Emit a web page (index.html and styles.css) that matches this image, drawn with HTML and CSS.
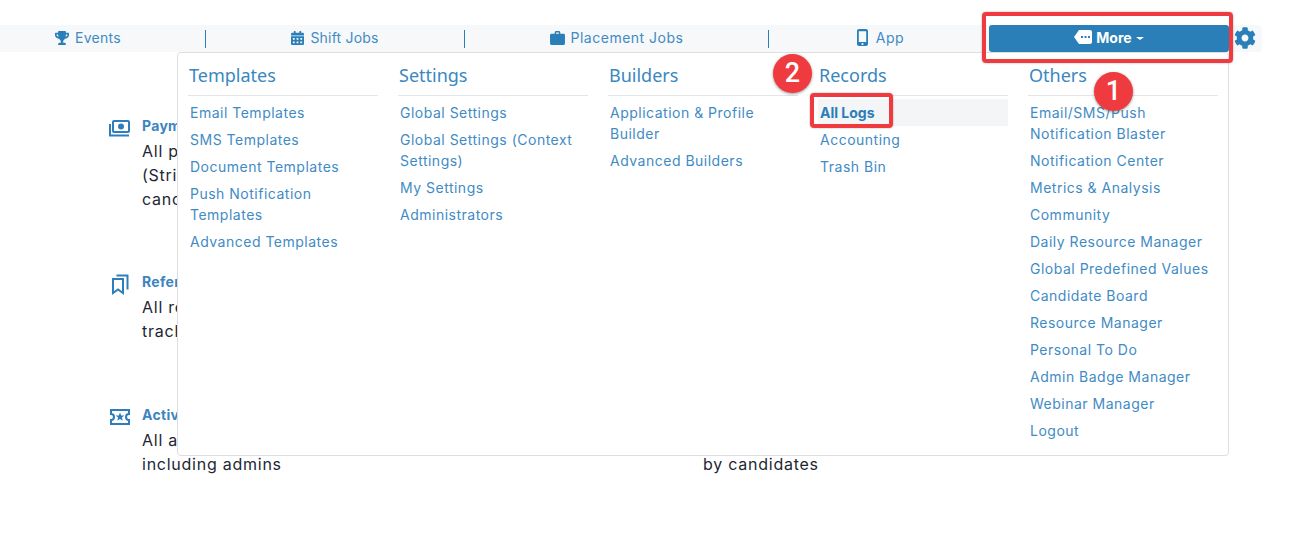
FILE: index.html
```html
<!DOCTYPE html>
<html lang="en">
<head>
<meta charset="utf-8">
<title>All Logs</title>
<link rel="stylesheet" href="styles.css">
</head>
<body>
<header class="topbar">
  <nav class="tabs">
    <a class="tab tab-first"><svg class="icon i-trophy" viewBox="0 0 576 512" preserveAspectRatio="none"><path d="M552 64H448V24c0-13.3-10.7-24-24-24H152c-13.3 0-24 10.7-24 24v40H24C10.7 64 0 74.7 0 88v56c0 35.7 22.5 72.4 61.9 100.7 31.5 22.7 69.8 37.1 110 41.7C203.3 338.5 240 360 240 360v72h-48c-35.3 0-64 20.7-64 56v12c0 6.6 5.4 12 12 12h296c6.6 0 12-5.4 12-12v-12c0-35.3-28.7-56-64-56h-48v-72s36.7-21.5 68.1-73.6c40.3-4.6 78.7-19 110-41.7 39.3-28.3 61.9-65 61.9-100.7V88c0-13.3-10.7-24-24-24zM99.3 192.8C74.9 175.2 64 155.6 64 144v-16h64.2c1 32.6 5.8 61.2 12.8 86.2-15.1-5.2-29.2-12.4-41.7-21.4zM512 144c0 16.1-17.7 36.1-35.3 48.8-12.5 9-26.7 16.2-41.8 21.4 7-25 11.8-53.6 12.8-86.2H512v16z"/></svg>Events</a>
    <a class="tab tab-shift"><svg class="icon i-cal" viewBox="0 0 448 512" preserveAspectRatio="none"><path d="M0 464c0 26.5 21.5 48 48 48h352c26.5 0 48-21.5 48-48V192H0v272zm320-196c0-6.6 5.4-12 12-12h40c6.6 0 12 5.4 12 12v40c0 6.6-5.4 12-12 12h-40c-6.6 0-12-5.4-12-12v-40zm0 128c0-6.6 5.4-12 12-12h40c6.6 0 12 5.4 12 12v40c0 6.6-5.4 12-12 12h-40c-6.6 0-12-5.4-12-12v-40zM192 268c0-6.6 5.4-12 12-12h40c6.6 0 12 5.4 12 12v40c0 6.6-5.4 12-12 12h-40c-6.6 0-12-5.4-12-12v-40zm0 128c0-6.6 5.4-12 12-12h40c6.6 0 12 5.4 12 12v40c0 6.6-5.4 12-12 12h-40c-6.6 0-12-5.4-12-12v-40zM64 268c0-6.6 5.4-12 12-12h40c6.6 0 12 5.4 12 12v40c0 6.6-5.4 12-12 12H76c-6.6 0-12-5.4-12-12v-40zm0 128c0-6.6 5.4-12 12-12h40c6.6 0 12 5.4 12 12v40c0 6.6-5.4 12-12 12H76c-6.6 0-12-5.4-12-12v-40zM400 64h-48V16c0-8.8-7.2-16-16-16h-32c-8.8 0-16 7.2-16 16v48H160V16c0-8.8-7.2-16-16-16h-32c-8.8 0-16 7.2-16 16v48H48C21.5 64 0 85.5 0 112v48h448v-48c0-26.5-21.500-48-48-48z"/></svg>Shift Jobs</a>
    <a class="tab tab-place"><svg class="icon i-case" viewBox="0 0 16 15"><path d="M5 3V1.6C5 .7 5.7 0 6.6 0h2.8C10.300 0 11 .7 11 1.600V3h3.500C15.300 3 16 3.700 16 4.500v9c0 .8-.7 1.500-1.500 1.500h-13C.7 15 0 14.300 0 13.500v-9C0 3.700.7 3 1.500 3zm1.500 0h3V1.500h-3z" fill-rule="evenodd"/></svg>Placement Jobs</a>
    <a class="tab tab-app"><svg class="icon i-phone" viewBox="0 0 11 17"><path d="M2 0h7c1.100 0 2 .9 2 2v13c0 1.100-.9 2-2 2H2c-1.100 0-2-.9-2-2V2C0 .9.900 0 2 0zm-.2 2.200v10.900h7.400V2.200zM5.500 13.900a1.100 1.100 0 1 0 0 2.200 1.100 1.100 0 0 0 0-2.200z" fill-rule="evenodd"/></svg>App</a>
  </nav>
  <button class="more" type="button"><svg class="i-tag" viewBox="0 0 18 14"><path d="M5 0h11c1.100 0 2 .9 2 2v10c0 1.100-.9 2-2 2H5L0 7zM7 6v2h2V6zm3.500 0v2h2V6zM14 6v2h2V6z" fill-rule="evenodd"/></svg><span>More</span><i class="caret"></i></button>
  <a class="gear"><svg class="i-gear" viewBox="0 0 512 512"><path d="M487.400 315.700l-42.600-24.600c4.300-23.200 4.300-47 0-70.200l42.600-24.600c4.900-2.800 7.100-8.600 5.500-14-11.100-35.600-30-67.800-54.700-94.600-3.800-4.100-10-5.100-14.800-2.300L380.800 110c-17.900-15.400-38.500-27.300-60.800-35.100V25.800c0-5.600-3.900-10.500-9.400-11.700-36.700-8.200-74.300-7.800-109.200 0-5.500 1.200-9.400 6.100-9.400 11.700V75c-22.200 7.900-42.800 19.800-60.800 35.100L88.700 85.500c-4.900-2.800-11-1.900-14.800 2.300-24.700 26.700-43.600 58.900-54.700 94.600-1.700 5.400.6 11.200 5.500 14L67.300 221c-4.300 23.200-4.300 47 0 70.200l-42.600 24.600c-4.900 2.800-7.100 8.600-5.500 14 11.100 35.600 30 67.800 54.700 94.600 3.800 4.100 10 5.100 14.800 2.300l42.600-24.600c17.900 15.400 38.500 27.300 60.800 35.100v49.200c0 5.600 3.900 10.500 9.400 11.700 36.700 8.200 74.300 7.800 109.200 0 5.500-1.200 9.400-6.100 9.400-11.700v-49.200c22.200-7.900 42.800-19.800 60.800-35.100l42.600 24.600c4.900 2.800 11 1.900 14.800-2.300 24.700-26.700 43.600-58.900 54.700-94.600 1.500-5.500-.7-11.300-5.600-14.100zM256 336c-44.100 0-80-35.900-80-80s35.900-80 80-80 80 35.900 80 80-35.900 80-80 80z"/></svg></a>
</header>

<main class="features">
  <section class="feature">
    <svg class="f-icon" viewBox="0 0 24 22"><g fill="none" stroke="currentColor" stroke-width="2"><rect x="4" y="4" width="16" height="11" rx="1"/><path d="M1 7v11.500h19"/></g><circle cx="12" cy="9.500" r="3"/></svg>
    <div><h3>Payment Logs</h3><p>All payments<br>(Stripe<br>candidates</p></div>
  </section>
  <div></div>
  <section class="feature">
    <svg class="f-icon" viewBox="0 0 24 22"><g fill="none" stroke="currentColor" stroke-width="2"><path d="M4 6h10v14l-5-3.500L4 20z"/><path d="M7.500 2.500h11v14"/></g></svg>
    <div><h3>Referral Logs</h3><p>All referrals<br>tracked</p></div>
  </section>
  <div></div>
  <section class="feature">
    <svg class="f-icon" viewBox="0 0 24 22"><path fill="none" stroke="currentColor" stroke-width="2" d="M2 4h18v4a3 3 0 0 0 0 6v4H2v-4a3 3 0 0 0 0-6z"/><path d="M11 6.500l1.200 3h3.200l-2.500 2 .9 3.200-2.800-1.800-2.800 1.800.9-3.200-2.500-2h3.200z"/></svg>
    <div><h3>Activity Logs</h3><p>All activity<br>including admins</p></div>
  </section>
  <section class="feature">
    <span class="f-spacer"></span>
    <div><h3>Candidate Logs</h3><p>All activity<br>by candidates</p></div>
  </section>
</main>

<div class="menu">
  <div class="menu-col">
    <h4>Templates</h4>
    <a>Email Templates</a><a>SMS Templates</a><a>Document Templates</a><a>Push Notification Templates</a><a>Advanced Templates</a>
  </div>
  <div class="menu-col">
    <h4>Settings</h4>
    <a>Global Settings</a><a>Global Settings (Context Settings)</a><a>My Settings</a><a>Administrators</a>
  </div>
  <div class="menu-col">
    <h4>Builders</h4>
    <a>Application &amp; Profile Builder</a><a>Advanced Builders</a>
  </div>
  <div class="menu-col">
    <h4>Records</h4>
    <a class="active">All Logs</a><a>Accounting</a><a>Trash Bin</a>
  </div>
  <div class="menu-col">
    <h4>Others</h4>
    <a>Email/SMS/Push Notification Blaster</a><a>Notification Center</a><a>Metrics &amp; Analysis</a><a>Community</a><a>Daily Resource Manager</a><a>Global Predefined Values</a><a>Candidate Board</a><a>Resource Manager</a><a>Personal To Do</a><a>Admin Badge Manager</a><a>Webinar Manager</a><a>Logout</a>
  </div>
</div>

<div class="mark mark-more"></div>
<div class="mark mark-logs"></div>
<div class="badge badge-1">1</div>
<div class="badge badge-2">2</div>
</body>
</html>
```
FILE: styles.css
```css
* { box-sizing: border-box; }
html, body { margin: 0; padding: 0; }
body {
  height: 535px;
  overflow: hidden;
  background: #fff;
  padding-top: 25px;
  font-family: Inter, "Liberation Sans", sans-serif;
  color: #1d2733;
  position: relative;
}
.topbar {
  display: flex;
  width: 1262px;
  height: 27px;
  background: #f6f8fa;
  border-radius: 0 4px 4px 0;
}
.tabs { display: flex; width: 989px; align-items: center; }
.tab {
  display: flex;
  align-items: center;
  justify-content: center;
  height: 18px;
  padding-bottom: 2px;
  color: #3f8bc4;
  font-size: 14px;
  letter-spacing: .3px;
  border-right: 1px solid #2a7fb8;
}
.tab-first { width: 206px; padding-right: 29px; }
.tab-shift { width: 259px; letter-spacing: .2px; }
.tab-place { width: 304px; letter-spacing: .5px; }
.tab-app { flex: 1; border-right: 0; letter-spacing: .6px; padding-left: 3px; }
.icon { fill: #2a7fb8; margin-right: 6px; flex: none; }
.i-trophy { width: 14px; height: 14px; }
.i-cal { width: 13px; height: 14px; }
.i-case { width: 15px; height: 14px; }
.i-phone { width: 11px; height: 17px; margin-right: 8px; }
.more {
  width: 240px;
  height: 27px;
  display: flex;
  align-items: center;
  justify-content: center;
  background: #2a7fb8;
  color: #fff;
  border: 0;
  border-radius: 3px;
  font: 700 14px Inter, "Liberation Sans", sans-serif;
  padding: 0 0 2px;
}
.i-tag { width: 18px; height: 14px; fill: #fff; margin-right: 4px; margin-bottom: 2px; }
.caret {
  margin: 2px 0 0 4px;
  border-left: 4px solid transparent;
  border-right: 4px solid transparent;
  border-top: 3px solid #fff;
}
.gear { flex: 1; display: flex; align-items: center; padding: 0 0 2px 5px; }
.i-gear { width: 22px; height: 22px; fill: #2a7fb8; }

.features {
  display: grid;
  grid-template-columns: 561px 1fr;
  grid-template-rows: 156px 133px auto;
  margin: 62px 0 0 109px;
}
.feature { display: flex; align-items: flex-start; }
.f-icon { width: 24px; height: 22px; flex: none; margin: 3px 9px 0 0; color: #2f7ebc; fill: #2f7ebc; }
.f-spacer { width: 33px; flex: none; }
.feature h3 {
  margin: 0 0 1px;
  font-size: 14px;
  line-height: 24px;
  font-weight: 700;
  letter-spacing: .3px;
  color: #3d84c0;
  white-space: nowrap;
}
.feature p { margin: 0; font-size: 16px; line-height: 24px; letter-spacing: .75px; white-space: nowrap; }

.menu {
  position: absolute;
  left: 177px;
  top: 52px;
  width: 1052px;
  height: 404px;
  display: flex;
  gap: 20px;
  padding: 10px;
  background: #fff;
  border: 1px solid #dcdee0;
  border-radius: 4px;
}
.menu-col { width: 190px; flex: none; }
.menu-col h4 {
  margin: 0 0 3px;
  height: 33px;
  padding-left: 1px;
  font: 400 18px/25px "Noto Sans", "Open Sans", sans-serif;
  color: #3a87c0;
  border-bottom: 1px solid #e3e5e8;
}
.menu-col a {
  display: block;
  padding: 3px 2px;
  font-size: 14px;
  line-height: 21px;
  letter-spacing: .5px;
  color: #3f8bc4;
}
.menu-col a.active { background: #f4f5f7; font-weight: 700; color: #2a7fb8; letter-spacing: 0; }

.mark {
  position: absolute;
  border: 4px solid #ef3b3f;
  border-radius: 4px;
  box-shadow: 0 0 2px rgba(0,0,0,.35);
}
.mark-more { left: 982px; top: 12px; width: 251px; height: 51px; }
.mark-logs { left: 810px; top: 93px; width: 83px; height: 35px; }
.badge {
  position: absolute;
  width: 39px;
  height: 39px;
  border-radius: 50%;
  background: #ef3b3f;
  color: #fff;
  font: 500 27px/39px Roboto, sans-serif;
  text-align: center;
  box-shadow: 0 1px 3px rgba(0,0,0,.4);
}
.badge-1 { left: 1094px; top: 72px; }
.badge-2 { left: 773px; top: 54px; }
```
